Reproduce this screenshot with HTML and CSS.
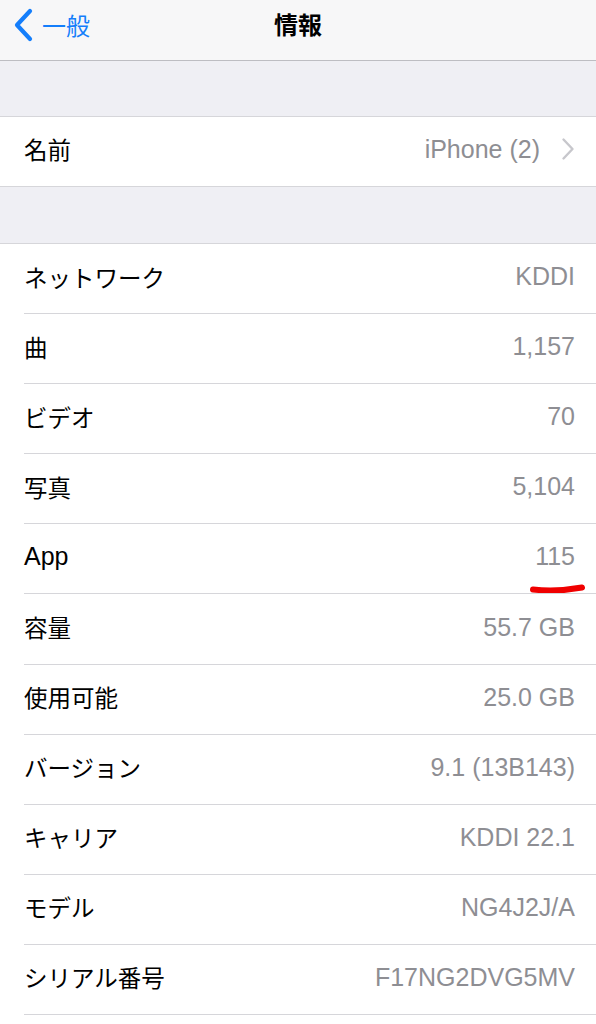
FILE: index.html
```html
<!DOCTYPE html>
<html lang="ja">
<head>
<meta charset="utf-8">
<title>情報</title>
<link rel="stylesheet" href="styles.css">
</head>
<body>
<header class="nav">
  <div class="back">
    <svg class="back-chev" width="22" height="34" viewBox="0 0 22 34"><path d="M18 3 L5 17 L18 31" fill="none" stroke="#147efb" stroke-width="4.2" stroke-linecap="round" stroke-linejoin="round"/></svg>
    <span class="back-text">一般</span>
  </div>
  <div class="title">情報</div>
</header>

<div class="gap gap-top"></div>
<section class="group group-name">
  <div class="row name-row">
    <span class="label">名前</span>
    <span class="value">iPhone (2)</span>
    <svg class="chev" width="14" height="24" viewBox="0 0 14 24"><path d="M2.5 2.5 L11.5 12 L2.5 21.5" fill="none" stroke="#c7c7cc" stroke-width="2.4" stroke-linecap="round" stroke-linejoin="round"/></svg>
  </div>
</section>
<div class="gap gap-mid"></div>
<section class="group list">
  <div class="row"><span class="label">ネットワーク</span><span class="value">KDDI</span></div>
  <div class="row"><span class="label">曲</span><span class="value">1,157</span></div>
  <div class="row"><span class="label">ビデオ</span><span class="value">70</span></div>
  <div class="row"><span class="label">写真</span><span class="value">5,104</span></div>
  <div class="row marked"><span class="label latin">App</span><span class="value">115</span>
    <svg class="mark" width="60" height="16" viewBox="0 0 60 16"><path d="M4 8.5 Q28 11 53 6.5" fill="none" stroke="#f00000" stroke-width="6" stroke-linecap="round"/></svg>
  </div>
  <div class="row"><span class="label">容量</span><span class="value">55.7 GB</span></div>
  <div class="row"><span class="label">使用可能</span><span class="value">25.0 GB</span></div>
  <div class="row"><span class="label">バージョン</span><span class="value">9.1 (13B143)</span></div>
  <div class="row"><span class="label">キャリア</span><span class="value">KDDI 22.1</span></div>
  <div class="row"><span class="label">モデル</span><span class="value">NG4J2J/A</span></div>
  <div class="row"><span class="label">シリアル番号</span><span class="value">F17NG2DVG5MV</span></div>
</section>
</body>
</html>
```

FILE: styles.css
```css
* { box-sizing: border-box; }
html, body { margin: 0; padding: 0; }
body {
  background: #efeff4;
  font-family: "Liberation Sans", "Noto Sans CJK JP", sans-serif;
  width: 596px;
  overflow: hidden;
}
.nav {
  height: 61px;
  background: #f7f7f8;
  border-bottom: 1px solid #bdbdc2;
  position: relative;
  display: flex;
  align-items: center;
  justify-content: center;
}
.back {
  position: absolute;
  left: 12px;
  top: 8px;
  display: flex;
  align-items: center;
  gap: 8px;
}
.back-text {
  font-family: "Noto Sans CJK JP", sans-serif;
  color: #147efb;
  font-size: 24px;
  line-height: 34px;
}
.back-chev { display: block; }
.title {
  font-family: "Noto Sans CJK JP", sans-serif;
  font-weight: 700;
  font-size: 24px;
  color: #000;
  padding-bottom: 14px;
}
.gap-top { height: 55px; }
.gap-mid { height: 56px; }
.group {
  background: #fff;
  border-top: 1px solid #d6d6da;
}
.group-name { border-bottom: 1px solid #d6d6da; }
.list { padding-bottom: 30px; }
.row {
  display: flex;
  align-items: center;
  justify-content: space-between;
  padding: 0 21px 5px 24px;
  position: relative;
}
.name-row { height: 69px; }
.name-row .value { margin-left: auto; margin-right: 21px; }
.list .row {
  height: 70.1px;
}
.list .row::after {
  content: "";
  position: absolute;
  left: 24px;
  right: 0;
  bottom: 0;
  height: 1px;
  background: #d6d6da;
}
.label {
  font-family: "Liberation Sans", "Noto Sans CJK JP", sans-serif;
  font-size: 23.5px;
  color: #000;
}
.label.latin { font-size: 25px; }
.value {
  font-size: 25px;
  color: #8e8e93;
}
.chev { display: block; }
.mark {
  position: absolute;
  right: 7px;
  top: 57px;
}
```
